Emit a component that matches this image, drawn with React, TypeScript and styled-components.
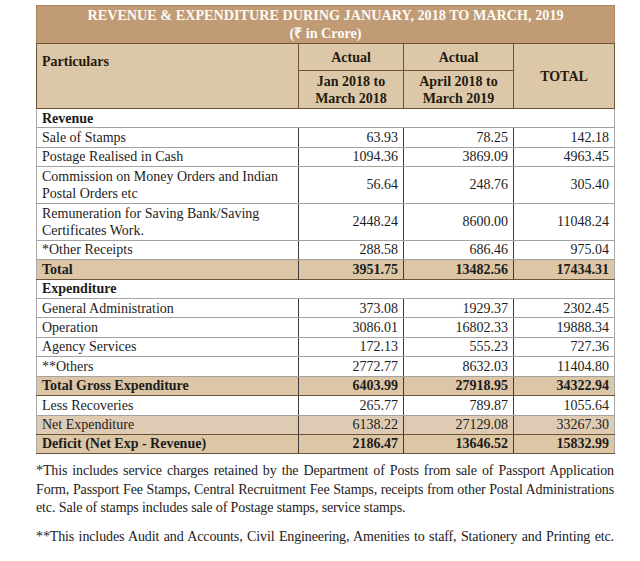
import React from "react";
import styled, { createGlobalStyle, css } from "styled-components";

const Global = createGlobalStyle`
  html, body { margin: 0; padding: 0; background: #fff; }
  body { font-family: "Liberation Serif", "Times New Roman", serif; color: #1c1c1c; }
`;

const Page = styled.div`
  width: 578px;
  padding: 5px 26px 0 36px;
`;

const Table = styled.table`
  width: 578px;
  border-collapse: collapse;
  table-layout: fixed;
  font-size: 14px;
`;

const TitleCell = styled.th`
  background: #c09b76;
  color: #fdfaf4;
  font-weight: bold;
  font-size: 14.2px;
  line-height: 17.5px;
  padding: 1px 0;
  text-align: center;
  border: 1px solid #a88560;
  border-bottom: 1px solid #6b5436;
`;

const HeadCell = styled.th<{ $align?: string; $top?: boolean; $h?: number }>`
  background: #dcc8a8;
  color: #241a0e;
  font-weight: bold;
  font-size: 14px;
  line-height: 17px;
  padding: ${(p) => (p.$top ? "9px 5px 0" : "0 4px")};
  height: ${(p) => (p.$h ? `${p.$h}px` : "auto")};
  text-align: ${(p) => p.$align || "center"};
  vertical-align: ${(p) => (p.$top ? "top" : "middle")};
  border: 1px solid #6b5436;
`;

type Kind = "plain" | "section" | "total" | "net";

const Row = styled.tr<{ $kind: Kind }>`
  background: ${(p) =>
    p.$kind === "total" ? "#dcc6a5" : p.$kind === "net" ? "#dfcbb3" : "#ffffff"};
  font-weight: ${(p) => (p.$kind === "total" || p.$kind === "section" ? "bold" : "normal")};
`;

const Cell = styled.td<{ $num?: boolean; $kind: Kind }>`
  line-height: 17.4px;
  padding: 0.5px 5px;
  text-align: ${(p) => (p.$num ? "right" : "left")};
  vertical-align: middle;
  border-top: 1px solid #a3a3a3;
  border-bottom: 1px solid #a3a3a3;
  border-left: 1px solid ${(p) => (p.$num ? "#3a3a3a" : "#a8a8a8")};
  border-right: 1px solid #3a3a3a;
  &:last-child { border-right: 1px solid #a8a8a8; }
  ${(p) =>
    (p.$kind === "total" || p.$kind === "net") &&
    css`
      border-top-color: #6b5436;
      border-bottom-color: #6b5436;
    `}
`;

const SectionCell = styled.td`
  line-height: 17.4px;
  padding: 0.5px 5px;
  font-weight: bold;
  border-left: 1px solid #a8a8a8;
  border-right: 1px solid #a8a8a8;
  border-bottom: 1px solid #a3a3a3;
`;

const Notes = styled.div`
  font-size: 14px;
  letter-spacing: -0.12px;
  line-height: 18.3px;
  color: #222;
  margin-top: 8px;
`;

const Note = styled.p`
  margin: 0 0 11px 0;
`;

const Line = styled.span<{ $last?: boolean }>`
  display: block;
  text-align: justify;
  text-align-last: ${(p) => (p.$last ? "left" : "justify")};
  white-space: nowrap;
`;

type R = { kind: Kind; label: string; v?: [string, string, string] };

const rows: R[] = [
  { kind: "section", label: "Revenue" },
  { kind: "plain", label: "Sale of Stamps", v: ["63.93", "78.25", "142.18"] },
  { kind: "plain", label: "Postage Realised in Cash", v: ["1094.36", "3869.09", "4963.45"] },
  { kind: "plain", label: "Commission on Money Orders and Indian Postal Orders etc", v: ["56.64", "248.76", "305.40"] },
  { kind: "plain", label: "Remuneration for Saving Bank/Saving Certificates Work.", v: ["2448.24", "8600.00", "11048.24"] },
  { kind: "plain", label: "*Other Receipts", v: ["288.58", "686.46", "975.04"] },
  { kind: "total", label: "Total", v: ["3951.75", "13482.56", "17434.31"] },
  { kind: "section", label: "Expenditure" },
  { kind: "plain", label: "General Administration", v: ["373.08", "1929.37", "2302.45"] },
  { kind: "plain", label: "Operation", v: ["3086.01", "16802.33", "19888.34"] },
  { kind: "plain", label: "Agency Services", v: ["172.13", "555.23", "727.36"] },
  { kind: "plain", label: "**Others", v: ["2772.77", "8632.03", "11404.80"] },
  { kind: "total", label: "Total Gross Expenditure", v: ["6403.99", "27918.95", "34322.94"] },
  { kind: "plain", label: "Less Recoveries", v: ["265.77", "789.87", "1055.64"] },
  { kind: "net", label: "Net Expenditure", v: ["6138.22", "27129.08", "33267.30"] },
  { kind: "total", label: "Deficit (Net Exp - Revenue)", v: ["2186.47", "13646.52", "15832.99"] },
];

export default function App() {
  return (
    <>
      <Global />
      <Page>
        <Table>
          <colgroup>
            <col style={{ width: 262 }} />
            <col style={{ width: 105 }} />
            <col style={{ width: 110 }} />
            <col style={{ width: 101 }} />
          </colgroup>
          <thead>
            <tr>
              <TitleCell colSpan={4}>
                REVENUE &amp; EXPENDITURE DURING JANUARY, 2018 TO MARCH, 2019
                <br />(₹ in Crore)
              </TitleCell>
            </tr>
            <tr>
              <HeadCell rowSpan={2} $align="left" $top>
                Particulars
              </HeadCell>
              <HeadCell $h={26}>Actual</HeadCell>
              <HeadCell $h={26}>Actual</HeadCell>
              <HeadCell rowSpan={2}>TOTAL</HeadCell>
            </tr>
            <tr>
              <HeadCell $h={37}>
                Jan 2018 to
                <br />
                March 2018
              </HeadCell>
              <HeadCell $h={37}>
                April 2018 to
                <br />
                March 2019
              </HeadCell>
            </tr>
          </thead>
          <tbody>
            {rows.map((r, i) =>
              r.kind === "section" ? (
                <Row key={i} $kind="section">
                  <SectionCell colSpan={4}>{r.label}</SectionCell>
                </Row>
              ) : (
                <Row key={i} $kind={r.kind}>
                  <Cell $kind={r.kind}>{r.label}</Cell>
                  {r.v!.map((v, j) => (
                    <Cell key={j} $kind={r.kind} $num>
                      {v}
                    </Cell>
                  ))}
                </Row>
              )
            )}
          </tbody>
        </Table>
        <Notes>
          <Note>
            <Line>*This includes service charges retained by the Department of Posts from sale of Passport Application</Line>
            <Line>Form, Passport Fee Stamps, Central Recruitment Fee Stamps, receipts from other Postal Administrations</Line>
            <Line $last>etc. Sale of stamps includes sale of Postage stamps, service stamps.</Line>
          </Note>
          <Note>
            <Line>**This includes Audit and Accounts, Civil Engineering, Amenities to staff, Stationery and Printing etc.</Line>
          </Note>
        </Notes>
      </Page>
    </>
  );
}
